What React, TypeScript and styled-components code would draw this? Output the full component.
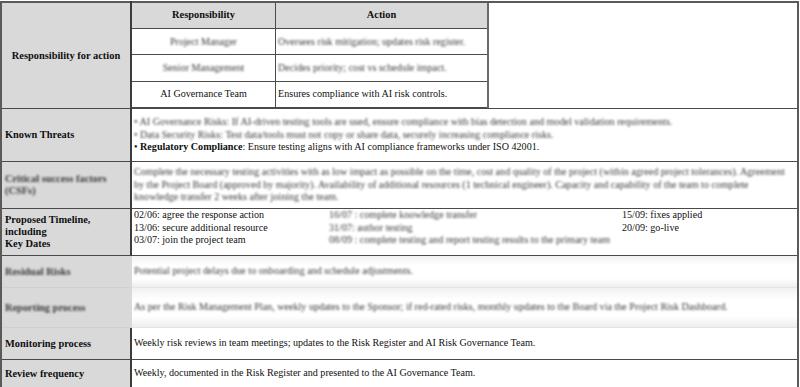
import React from 'react';
import styled, { createGlobalStyle } from 'styled-components';

const GlobalStyle = createGlobalStyle`
  html, body {
    margin: 0;
    padding: 0;
    background: #ffffff;
  }
  body {
    font-family: "Liberation Serif", "Times New Roman", serif;
    color: #0f0f0f;
  }
`;

const Page = styled.div`
  padding: 1px 0 0 0;
`;

const Sheet = styled.table`
  width: 799px;
  border-collapse: collapse;
  table-layout: fixed;
  border: 2px solid #5a5a5a;
  font-size: 10.1px;
  line-height: 12.6px;
`;

const LabelCol = styled.col`
  width: 130px;
`;

const Row = styled.tr<{ h: number }>`
  height: ${p => p.h}px;
`;

const LabelCell = styled.td<{ center?: boolean }>`
  background: #d9d9d9;
  border: 1px solid #4a4a4a;
  border-right: 2px solid #3c3c3c;
  padding: 0 3px;
  font-weight: bold;
  font-size: 10.4px;
  line-height: 11.8px;
  text-align: ${p => (p.center ? 'center' : 'left')};
  vertical-align: middle;
`;

const ContentCell = styled.td<{ flush?: boolean; top?: boolean }>`
  border: 1px solid #4a4a4a;
  padding: ${p => (p.flush ? '0' : '0 2px')};
  vertical-align: ${p => (p.top ? 'top' : 'middle')};
`;

const InnerTable = styled.table`
  width: 100%;
  height: 105px;
  border-collapse: collapse;
  table-layout: fixed;
  font-size: 10.1px;
`;

const HeadCell = styled.th<{ w?: number }>`
  width: ${p => (p.w ? `${p.w}px` : 'auto')};
  height: 25px;
  background: #d9d9d9;
  border-right: 1px solid #4a4a4a;
  border-bottom: 1px solid #4a4a4a;
  font-weight: bold;
  font-size: 10.4px;
  text-align: center;
  padding: 0;
`;

const InnerCell = styled.td<{ align?: 'left' | 'center' }>`
  height: 25px;
  border-right: 1px solid #4a4a4a;
  border-bottom: 1px solid #4a4a4a;
  text-align: ${p => p.align || 'center'};
  padding: 0 2px;
`;

const EmptyCell = styled.td`
  border-left: 2px solid #6a6a6a;
  background: #ffffff;
`;

const Blur = styled.span`
  filter: blur(1.3px);
  color: #3a3a3a;
`;

const BlurBlock = styled.div`
  filter: blur(1.3px);
  color: #3a3a3a;
`;

const Line = styled.div`
  white-space: nowrap;
`;

const Strong = styled.b`
  font-weight: bold;
`;

const Timeline = styled.div`
  display: grid;
  grid-template-columns: 195px 293px 1fr;
`;

const TimelineCol = styled.div<{ muted?: boolean }>`
  display: flex;
  flex-direction: column;
  white-space: nowrap;
  ${p => (p.muted ? 'filter: blur(1.3px); color: #3a3a3a;' : '')}
`;

const HazyRow = styled.tr<{ h: number }>`
  height: ${p => p.h}px;
  background: linear-gradient(#f1f1f1, #ffffff 30%, #ffffff 70%, #ececec);
`;

const HazyLabel = styled(LabelCell)`
  border-color: #cfcfcf;
  border-right-color: #d9d9d9;
`;

const HazyContent = styled(ContentCell)`
  border-color: #e4e4e4;
`;

export default function App() {
  return (
    <Page>
      <GlobalStyle />
      <Sheet>
        <colgroup>
          <LabelCol />
          <col />
        </colgroup>
        <tbody>
          <Row h={105}>
            <LabelCell center>Responsibility for action</LabelCell>
            <ContentCell flush>
              <InnerTable>
                <tbody>
                  <tr>
                    <HeadCell w={143}>Responsibility</HeadCell>
                    <HeadCell w={211}>Action</HeadCell>
                    <EmptyCell rowSpan={4} />
                  </tr>
                  <tr>
                    <InnerCell>
                      <Blur>Project Manager</Blur>
                    </InnerCell>
                    <InnerCell align="left">
                      <Blur>Oversees risk mitigation; updates risk register.</Blur>
                    </InnerCell>
                  </tr>
                  <tr>
                    <InnerCell>
                      <Blur>Senior Management</Blur>
                    </InnerCell>
                    <InnerCell align="left">
                      <Blur>Decides priority; cost vs schedule impact.</Blur>
                    </InnerCell>
                  </tr>
                  <tr>
                    <InnerCell>AI Governance Team</InnerCell>
                    <InnerCell align="left">Ensures compliance with AI risk controls.</InnerCell>
                  </tr>
                </tbody>
              </InnerTable>
            </ContentCell>
          </Row>

          <Row h={53}>
            <LabelCell>Known Threats</LabelCell>
            <ContentCell>
              <BlurBlock>
                <Line>• AI Governance Risks: If AI-driven testing tools are used, ensure compliance with bias detection and model validation requirements.</Line>
                <Line>• Data Security Risks: Test data/tools must not copy or share data, securely increasing compliance risks.</Line>
              </BlurBlock>
              <Line>
                • <Strong>Regulatory Compliance</Strong>: Ensure testing aligns with AI compliance frameworks under ISO 42001.
              </Line>
            </ContentCell>
          </Row>

          <Row h={47}>
            <LabelCell>
              <Blur>Critical success factors (CSFs)</Blur>
            </LabelCell>
            <ContentCell>
              <BlurBlock>
                Complete the necessary testing activities with as low impact as possible on the time, cost and quality of the project (within agreed project tolerances).
                Agreement by the Project Board (approved by majority). Availability of additional resources (1 technical engineer). Capacity and capability of the team to complete
                knowledge transfer 2 weeks after joining the team.
              </BlurBlock>
            </ContentCell>
          </Row>

          <Row h={47}>
            <LabelCell>
              Proposed Timeline,
              <br />
              including
              <br />
              Key Dates
            </LabelCell>
            <ContentCell top>
              <Timeline>
                <TimelineCol>
                  <span>02/06: agree the response action</span>
                  <span>13/06: secure additional resource</span>
                  <span>03/07: join the project team</span>
                </TimelineCol>
                <TimelineCol muted>
                  <span>16/07 : complete knowledge transfer</span>
                  <span>31/07: author testing</span>
                  <span>08/09 : complete testing and report testing results to the primary team</span>
                </TimelineCol>
                <TimelineCol>
                  <span>15/09: fixes applied</span>
                  <span>20/09: go-live</span>
                </TimelineCol>
              </Timeline>
            </ContentCell>
          </Row>

          <HazyRow h={32}>
            <HazyLabel>
              <Blur>Residual Risks</Blur>
            </HazyLabel>
            <HazyContent>
              <Blur>Potential project delays due to onboarding and schedule adjustments.</Blur>
            </HazyContent>
          </HazyRow>

          <HazyRow h={40}>
            <HazyLabel>
              <Blur>Reporting process</Blur>
            </HazyLabel>
            <HazyContent>
              <Blur>As per the Risk Management Plan, weekly updates to the Sponsor; if red-rated risks, monthly updates to the Board via the Project Risk Dashboard.</Blur>
            </HazyContent>
          </HazyRow>

          <Row h={32}>
            <LabelCell>Monitoring process</LabelCell>
            <ContentCell>
              Weekly risk reviews in team meetings; updates to the Risk Register and AI Risk Governance Team.
            </ContentCell>
          </Row>

          <Row h={29}>
            <LabelCell>Review frequency</LabelCell>
            <ContentCell>Weekly, documented in the Risk Register and presented to the AI Governance Team.</ContentCell>
          </Row>
        </tbody>
      </Sheet>
    </Page>
  );
}
